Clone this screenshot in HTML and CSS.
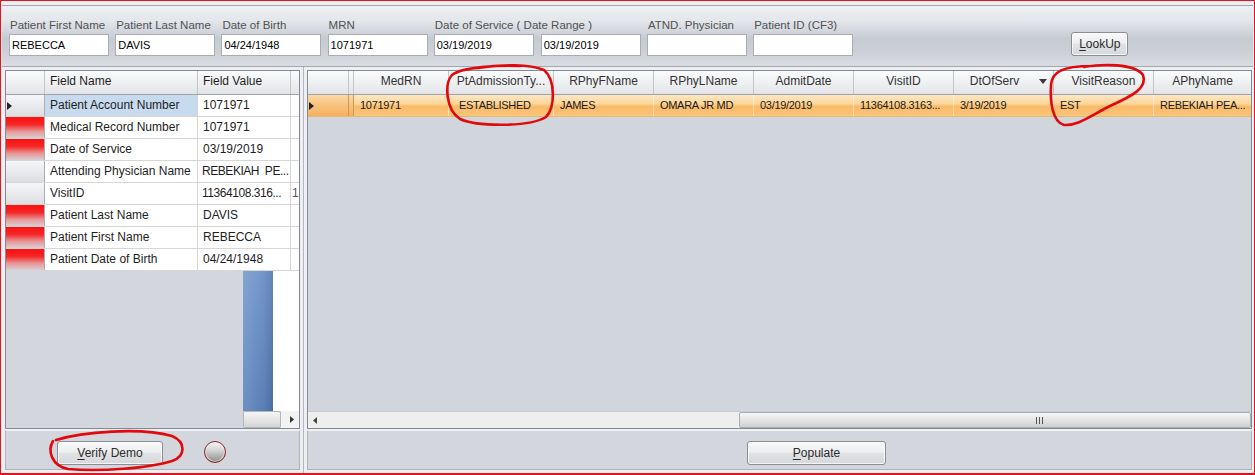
FILE: index.html
```html
<!DOCTYPE html>
<html>
<head>
<meta charset="utf-8">
<title>Patient Lookup</title>
<link rel="stylesheet" href="styles.css">
</head>
<body>
<div class="frame">
  <div class="toolbar">
    <div class="field"><label>Patient First Name</label><div class="input">REBECCA</div></div>
    <div class="field"><label>Patient Last Name</label><div class="input">DAVIS</div></div>
    <div class="field"><label>Date of Birth</label><div class="input">04/24/1948</div></div>
    <div class="field"><label>MRN</label><div class="input">1071971</div></div>
    <div class="field field-range"><label>Date of Service ( Date Range )</label>
      <div class="inputs"><div class="input">03/19/2019</div><div class="input">03/19/2019</div></div>
    </div>
    <div class="field"><label>ATND. Physician</label><div class="input"></div></div>
    <div class="field"><label>Patient ID (CF3)</label><div class="input"></div></div>
    <button class="btn btn-lookup"><u>L</u>ookUp</button>
  </div>

  <div class="main">
    <div class="col col-left">
      <div class="grid">
        <div class="lrow lhead">
          <div class="c rh"></div><div class="c fname">Field Name</div><div class="c fval">Field Value</div><div class="c fx"></div>
        </div>
        <div class="lrow">
          <div class="c rh"><svg class="tri" width="5" height="8" viewBox="0 0 5 8"><polygon points="0,0 5,4 0,8" fill="#222"/></svg></div>
          <div class="c fname sel">Patient Account Number</div><div class="c fval">1071971</div><div class="c fx"></div>
        </div>
        <div class="lrow">
          <div class="c rh red"></div><div class="c fname">Medical Record Number</div><div class="c fval">1071971</div><div class="c fx"></div>
        </div>
        <div class="lrow">
          <div class="c rh red"></div><div class="c fname">Date of Service</div><div class="c fval">03/19/2019</div><div class="c fx"></div>
        </div>
        <div class="lrow">
          <div class="c rh"></div><div class="c fname">Attending Physician Name</div><div class="c fval tight">REBEKIAH&nbsp; PE...</div><div class="c fx"></div>
        </div>
        <div class="lrow">
          <div class="c rh"></div><div class="c fname">VisitID</div><div class="c fval tight">11364108.316...</div><div class="c fx">1</div>
        </div>
        <div class="lrow">
          <div class="c rh red"></div><div class="c fname">Patient Last Name</div><div class="c fval">DAVIS</div><div class="c fx"></div>
        </div>
        <div class="lrow">
          <div class="c rh red"></div><div class="c fname">Patient First Name</div><div class="c fval">REBECCA</div><div class="c fx"></div>
        </div>
        <div class="lrow">
          <div class="c rh red"></div><div class="c fname">Patient Date of Birth</div><div class="c fval">04/24/1948</div><div class="c fx"></div>
        </div>
        <div class="lfill">
          <div class="lfill-grey"></div><div class="lfill-blue"></div><div class="lfill-white"></div>
        </div>
        <div class="lscroll">
          <div class="lscroll-grey"></div><div class="lscroll-thumb"></div><div class="lscroll-track"></div>
          <div class="lscroll-arrow"><svg width="4" height="7" viewBox="0 0 4 7"><polygon points="0,0 4,3.5 0,7" fill="#333"/></svg></div>
        </div>
      </div>
      <div class="panel panel-left">
        <button class="btn btn-verify"><u>V</u>erify Demo</button>
        <span class="led"></span>
      </div>
    </div>

    <div class="splitter"></div>

    <div class="col col-right">
      <div class="grid">
        <div class="rhead">
          <div class="h rc-rh"></div>
          <div class="h rc-thin"></div>
          <div class="h rc-medrn">MedRN</div>
          <div class="h rc-ptadm">PtAdmissionTy...</div>
          <div class="h rc-std">RPhyFName</div>
          <div class="h rc-std">RPhyLName</div>
          <div class="h rc-std">AdmitDate</div>
          <div class="h rc-std">VisitID</div>
          <div class="h rc-std sort"><span class="sort-label">DtOfServ</span><svg class="sort-ico" width="8" height="5" viewBox="0 0 8 5"><polygon points="0,0 8,0 4,5" fill="#3a3a3a"/></svg></div>
          <div class="h rc-std">VisitReason</div>
          <div class="h rc-last">APhyName</div>
        </div>
        <div class="rdata">
          <div class="d rc-rh rowhead"><svg class="tri" width="5" height="8" viewBox="0 0 5 8"><polygon points="0,0 5,4 0,8" fill="#222"/></svg></div>
          <div class="d rc-thin rowhead"></div>
          <div class="d rc-medrn">1071971</div>
          <div class="d rc-ptadm pad10">ESTABLISHED</div>
          <div class="d rc-std">JAMES</div>
          <div class="d rc-std">OMARA JR MD</div>
          <div class="d rc-std">03/19/2019</div>
          <div class="d rc-std">11364108.3163...</div>
          <div class="d rc-std">3/19/2019</div>
          <div class="d rc-std">EST</div>
          <div class="d rc-last">REBEKIAH PEA...</div>
        </div>
        <div class="rfill"></div>
        <div class="rscroll">
          <div class="rscroll-arrow"><svg width="4" height="7" viewBox="0 0 4 7"><polygon points="4,0 0,3.5 4,7" fill="#444"/></svg></div>
          <div class="rscroll-track"></div>
          <div class="rscroll-thumb"><span class="grip"></span><span class="grip"></span><span class="grip"></span></div>
        </div>
      </div>
      <div class="panel panel-right">
        <button class="btn btn-populate"><u>P</u>opulate</button>
      </div>
    </div>
  </div>

  <svg class="annot" width="1255" height="475" viewBox="0 0 1255 475">
    <path d="M478 68 C500 64 530 64 544 70 C556 80 555 108 546 117 C530 127 478 127 460 119 C446 110 444 84 452 75 C462 67 500 65 520 66"/>
    <path d="M1084 67 C1102 64 1134 63 1143 75 C1148 88 1132 96 1110 106 C1090 116 1078 126 1064 125 C1052 122 1050 100 1051 85 C1052 72 1062 66 1092 66"/>
    <path d="M56 440 C82 432 140 427 172 436 C186 442 186 456 172 461 C150 468 100 472 68 469 C52 466 47 451 53 441"/>
  </svg>
</div>
</body>
</html>
```

FILE: styles.css
```css
* { box-sizing: border-box; }

html, body {
  margin: 0;
  padding: 0;
  background: #ffffff;
}

.frame {
  position: relative;
  width: 1255px;
  height: 475px;
  border: 1px solid #e3141c;
  border-bottom-width: 2px;
  background: #edeff2;
  font-family: "Liberation Sans", Arial, sans-serif;
  color: #222;
  display: flex;
  flex-direction: column;
  overflow: hidden;
}

/* ---------- top search bar ---------- */
.toolbar {
  flex: none;
  margin: 4px 1px 0;
  height: 62px;
  border-top: 1px solid #a3a7ad;
  border-bottom: 1px solid #a3a7ad;
  background: linear-gradient(to bottom, #eef0f3 0%, #e3e6ea 25%, #d0d4da 45%, #c6cad1 55%, #ccd0d6 75%, #d9dce1 100%);
  display: flex;
  align-items: flex-start;
  gap: 6.2px;
  padding: 12px 0 0 7px;
}

.field {
  width: 100px;
  display: flex;
  flex-direction: column;
}

.field-range { width: 207px; }

.field label {
  height: 14px;
  margin-bottom: 2px;
  padding-left: 1px;
  font-size: 11.5px;
  line-height: 14px;
  color: #525252;
  white-space: nowrap;
}

.inputs {
  display: flex;
  gap: 7px;
}

.input {
  width: 100px;
  height: 22px;
  border: 1px solid #a9acb2;
  background: #ffffff;
  padding: 0 2px;
  font-size: 11px;
  line-height: 20px;
  color: #000;
  white-space: nowrap;
}

/* ---------- buttons ---------- */
.btn {
  font-family: "Liberation Sans", Arial, sans-serif;
  font-size: 12px;
  color: #2b2b2b;
  border: 1px solid #8a8d93;
  border-radius: 3px;
  background: linear-gradient(to bottom, #f8f8f9 0%, #eeeff1 45%, #e0e2e5 52%, #d6d8dc 100%);
  box-shadow: inset 0 0 0 1px rgba(255, 255, 255, 0.75);
  padding: 0;
  height: 24px;
  cursor: default;
}

.btn u { text-decoration: underline; text-underline-offset: 2px; }

.btn-lookup {
  width: 57px;
  margin-top: 14px;
  margin-left: 212px;
}

.btn-verify { width: 106px; }

.btn-populate { width: 139px; }

/* ---------- main split ---------- */
.main {
  flex: 1;
  display: flex;
  padding: 3px 2px 3px 4px;
}

.col {
  display: flex;
  flex-direction: column;
  gap: 1px;
}

.col-left { width: 295px; }
.col-right { width: 945px; }

.splitter {
  width: 7px;
  margin: -3px 0;
  background: linear-gradient(to right, transparent 3px, #b3b7bd 3px, #b3b7bd 4px, transparent 4px);
}

.grid {
  flex: none;
  height: 359px;
  border: 1px solid #858a92;
  background: #d3d6dd;
  display: flex;
  flex-direction: column;
  overflow: hidden;
}

/* ---------- left grid ---------- */
.lrow {
  flex: none;
  display: flex;
  height: 22px;
  border-bottom: 1px solid #d6d6d6;
  background: #ffffff;
  font-size: 12px;
  color: #1e1e1e;
}

.lhead {
  height: 24px;
  border-bottom: 1px solid #9ea2a8;
  background: linear-gradient(to bottom, #fafbfc 0%, #eff0f2 50%, #e2e4e7 100%);
}

.c {
  line-height: 21px;
  padding-left: 5px;
  white-space: nowrap;
  overflow: hidden;
  border-right: 1px solid #d6d6d6;
}

.lhead .c {
  line-height: 20px;
  border-right-color: #c2c5ca;
}

.rh {
  width: 39px;
  padding-left: 1px;
  border-right: 1px solid #a9adb3;
  background: linear-gradient(to bottom, #f5f6f8 0%, #e8eaed 50%, #dcdee2 100%);
  display: flex;
  align-items: center;
}

.rh.red {
  background: linear-gradient(to bottom, #ff0f0f 0%, #f42626 35%, #e89496 68%, #d9cfd3 100%);
}

.lhead .rh { background: transparent; }

.tri { display: block; }

.fname { width: 153px; }
.fval { width: 93px; }
.fval.tight { letter-spacing: -0.45px; padding-left: 4px; }
.fx { width: 8px; padding-left: 1px; border-right: none; color: #555; }

.sel { background: #c7daee; }

.lfill {
  flex: none;
  height: 140px;
  display: flex;
}

.lfill-grey { width: 237px; background: #d3d6dd; }

.lfill-blue {
  width: 30px;
  background:
    linear-gradient(to bottom, rgba(255, 255, 255, 0.12), rgba(0, 0, 0, 0.06)),
    linear-gradient(to right, #7299cd 0%, #5f86c1 70%, #4f73ab 100%);
}

.lfill-white { width: 26px; background: #ffffff; }

.lscroll {
  flex: none;
  height: 17px;
  display: flex;
}

.lscroll-grey { width: 237px; background: #d3d6dd; }

.lscroll-thumb {
  width: 38px;
  border: 1px solid #b2b5b9;
  border-radius: 2px;
  background: linear-gradient(to bottom, #f6f6f6 0%, #e6e6e6 50%, #d4d4d4 100%);
}

.lscroll-track { width: 6px; background: #f2f2f2; }

.lscroll-arrow {
  width: 12px;
  background: #f2f2f2;
  display: flex;
  align-items: center;
  padding-left: 3px;
}

/* ---------- right grid ---------- */
.rhead {
  flex: none;
  display: flex;
  height: 24px;
  border-bottom: 1px solid #9ea2a8;
  background: linear-gradient(to bottom, #fafbfc 0%, #eff0f2 50%, #e2e4e7 100%);
  font-size: 12px;
  color: #333;
}

.h {
  text-align: center;
  line-height: 20px;
  white-space: nowrap;
  overflow: hidden;
  border-right: 1px solid #c2c5ca;
}

.rc-rh { width: 41px; }
.rc-thin { width: 5px; }
.rc-medrn { width: 95px; }
.rc-ptadm { width: 105px; }
.rc-std { width: 100px; }
.rc-last { width: 97px; border-right: none; }

.sort {
  display: flex;
  align-items: flex-start;
  padding-right: 6px;
}

.sort-label { flex: 1; text-align: center; line-height: 20px; }
.sort-ico { display: block; margin: 8px 0 0 4px; }

.rdata {
  flex: none;
  display: flex;
  height: 22px;
  border-bottom: 1px solid #e4b878;
  background: linear-gradient(to bottom, #fde7c4 0%, #fcd599 42%, #f9bb68 55%, #fac57a 100%);
  font-size: 11px;
  letter-spacing: -0.3px;
  color: #1a1a1a;
}

.d {
  line-height: 21px;
  padding-left: 6px;
  white-space: nowrap;
  overflow: hidden;
  border-right: 1px solid rgba(255, 255, 255, 0.45);
}

.d.rc-last { border-right: none; }
.pad10 { padding-left: 10px; }

.rowhead {
  padding-left: 1px;
  border-right: 1px solid #c79a5e;
  background: linear-gradient(to bottom, #fbd9a8 0%, #f8c27c 50%, #f5b060 100%);
  display: flex;
  align-items: center;
}

.rfill {
  flex: 1;
  background: #d1d5dc;
}

.rscroll {
  flex: none;
  height: 17px;
  display: flex;
  background: #eeeeee;
  border-top: 1px solid #c9cbce;
}

.rscroll-arrow {
  width: 15px;
  display: flex;
  align-items: center;
  padding-left: 5px;
}

.rscroll-track { width: 416px; }

.rscroll-thumb {
  width: 512px;
  border: 1px solid #a9acb0;
  border-radius: 2px;
  background: linear-gradient(to bottom, #f6f6f6 0%, #e4e4e4 50%, #d0d0d0 100%);
  display: flex;
  align-items: center;
  gap: 2px;
  padding-left: 296px;
}

.grip {
  width: 1px;
  height: 7px;
  background: #555;
}

/* ---------- bottom panels ---------- */
.panel {
  flex: none;
  height: 40px;
  border: 1px solid #aeb2b9;
  border-top-color: #f2f3f5;
  background: #d3d6dd;
  display: flex;
  align-items: flex-start;
  padding-top: 10px;
}

.panel-left { padding-left: 51px; }
.panel-right { padding-left: 439px; }

.led {
  width: 22px;
  height: 22px;
  margin-left: 41px;
  border-radius: 50%;
  border: 1px solid #8a2222;
  background: linear-gradient(to bottom, #f4f4f4 0%, #d6d6d6 40%, #8e8e8e 100%);
  box-shadow: inset 0 0 0 1px rgba(255, 255, 255, 0.5);
}

/* ---------- annotations ---------- */
.annot {
  position: absolute;
  left: -1px;
  top: -1px;
  pointer-events: none;
}

.annot path {
  fill: none;
  stroke: #e1090b;
  stroke-width: 2.6;
  stroke-linecap: round;
  stroke-linejoin: round;
}
```
